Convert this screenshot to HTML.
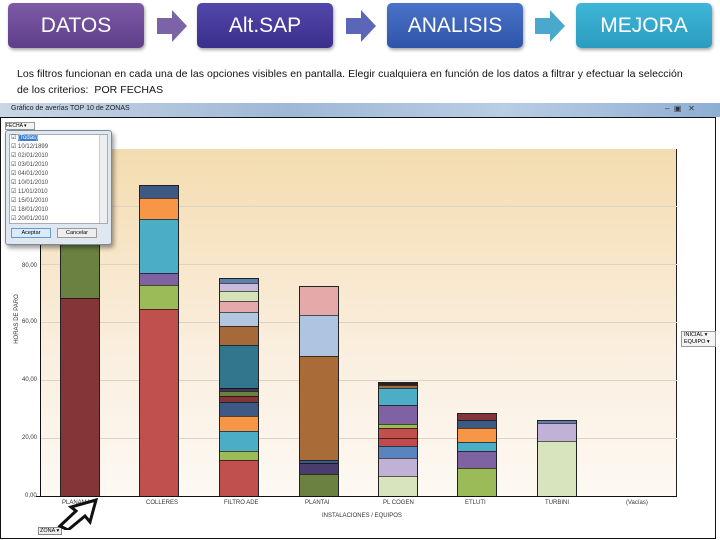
<!DOCTYPE html>
<html><head><meta charset="utf-8"><style>
*{margin:0;padding:0;box-sizing:border-box}
body{width:720px;height:540px;position:relative;background:#fff;font-family:"Liberation Sans",sans-serif;overflow:hidden}
.a{position:absolute}
.box{position:absolute;top:3px;width:136px;height:45px;border-radius:5px;color:#fff;font-size:21px;text-align:center;line-height:45px;box-shadow:1px 2px 3px rgba(0,0,0,.35)}
.arr{position:absolute;top:10px;width:30px;height:32px}
.seg{position:absolute;border-top:1px solid rgba(0,0,0,.6)}
.t{font-size:6px;color:#333;position:absolute}
</style></head><body>
<div class="box" style="left:8px;background:linear-gradient(#7d5aa6,#5f3f89)">DATOS</div>
<div class="box" style="left:197px;background:linear-gradient(#5248ab,#3b2f8c)">Alt.SAP</div>
<div class="box" style="left:387px;background:linear-gradient(#4a72c8,#2e55a8)">ANALISIS</div>
<div class="box" style="left:576px;background:linear-gradient(#3fb6d8,#2a9cc0)">MEJORA</div>
<svg class="arr" style="left:157px" viewBox="0 0 30 32"><path d="M0 8H15V0L30 16L15 32V24H0Z" fill="#7a63a6"/></svg>
<svg class="arr" style="left:346px" viewBox="0 0 30 32"><path d="M0 8H15V0L30 16L15 32V24H0Z" fill="#5b66b8"/></svg>
<svg class="arr" style="left:535px" viewBox="0 0 30 32"><path d="M0 8H15V0L30 16L15 32V24H0Z" fill="#49a8cc"/></svg>
<div class="a" style="left:17px;top:66px;font-size:10.5px;line-height:16px;color:#111;width:692px;letter-spacing:0.05px;white-space:nowrap">Los filtros funcionan en cada una de las opciones visibles en pantalla. Elegir cualquiera en función de los datos a filtrar y efectuar la selección<br>de los criterios:&nbsp; POR FECHAS</div>
<!-- window -->
<div class="a" style="left:0;top:103px;width:720px;height:14px;background:linear-gradient(90deg,#c9d6e6,#9fb8d6 40%,#b9cde4 70%,#8eaed3)"></div>
<div class="a" style="left:11px;top:105px;font-size:7px;color:#222">Gráfico de averías TOP 10 de ZONAS</div>
<div class="a" style="left:665px;top:104px;font-size:8px;color:#333">–&nbsp; ▣ &nbsp; ✕</div>
<div class="a" style="left:0;top:117px;width:716px;height:422px;border:1px solid #111;background:#fff"></div>
<div class="a" style="left:40px;top:149px;width:637px;height:347px;background:linear-gradient(#f4dcb0,#faefe0 60%,#fdf9f3);border-right:1px solid #222"></div>
<div class="a" style="left:40px;top:206px;width:637px;height:1px;background:#ddd3c3"></div>
<div class="a" style="left:40px;top:264px;width:637px;height:1px;background:#ddd3c3"></div>
<div class="a" style="left:40px;top:322px;width:637px;height:1px;background:#ddd3c3"></div>
<div class="a" style="left:40px;top:380px;width:637px;height:1px;background:#ddd3c3"></div>
<div class="a" style="left:40px;top:438px;width:637px;height:1px;background:#ddd3c3"></div>
<div class="a" style="left:40px;top:149px;width:1px;height:348px;background:#111"></div>
<div class="a" style="left:36px;top:496px;width:641px;height:1px;background:#111"></div>
<div class="t" style="left:22px;top:263px">80,00</div>
<div class="t" style="left:22px;top:319px">60,00</div>
<div class="t" style="left:22px;top:377px">40,00</div>
<div class="t" style="left:22px;top:435px">20,00</div>
<div class="t" style="left:25px;top:493px">0,00</div>
<div class="t" style="left:-8px;top:316px;transform:rotate(-90deg)">HORAS DE PARO</div>
<div id="bars"></div>
<div class="t" style="left:62px;top:500px">PLANAMA</div>
<div class="t" style="left:146px;top:500px">COLLERES</div>
<div class="t" style="left:224px;top:500px">FILTRO ADE</div>
<div class="t" style="left:305px;top:500px">PLANTAI</div>
<div class="t" style="left:383px;top:500px">PL COGEN</div>
<div class="t" style="left:465px;top:500px">ETLUTI</div>
<div class="t" style="left:545px;top:500px">TURBINI</div>
<div class="t" style="left:626px;top:500px">(Vacías)</div>
<div class="t" style="left:322px;top:513px">INSTALACIONES / EQUIPOS</div>
<div class="a" style="left:681px;top:331px;width:35px;height:16px;border:1px solid #999;background:#f4f4f4;font-size:5.5px;line-height:7px;padding-left:2px">INICIAL ▾<br>EQUIPO ▾</div>
<div class="a" style="left:38px;top:527px;width:24px;height:8px;border:1px solid #888;background:#f0f0f0;font-size:5.5px;line-height:7px;padding-left:1px">ZONA ▾</div>
<svg class="a" style="left:56px;top:498px" width="46" height="32" viewBox="0 0 46 32"><path d="M4 28L20 13L15 9L40 2L34 24L29 18L12 32Z" fill="#fff" stroke="#111" stroke-width="3"/></svg>
<!-- popup -->
<div class="a" style="left:5px;top:122px;width:30px;height:8px;border:1px solid #999;background:#f4f4f4;font-size:5px">FECHA ▾</div>
<div class="a" style="left:5px;top:130px;width:107px;height:115px;border:1px solid #7a8a9a;border-radius:3px;background:#dfe8f1;box-shadow:2px 3px 5px rgba(0,0,0,.4)"></div>
<div class="a" style="left:9px;top:134px;width:99px;height:90px;background:#fff;border:1px solid #aab"></div>
<div class="a" style="left:99px;top:135px;width:8px;height:88px;background:#eee;border-left:1px solid #ccc"></div>
<div class="a" style="left:11px;top:134px;font-size:6px;line-height:9px;color:#444">☑ <span style="background:#3a7fd0;color:#fff">(Todas)</span><br>☑ 10/12/1899<br>☑ 02/01/2010<br>☑ 03/01/2010<br>☑ 04/01/2010<br>☑ 10/01/2010<br>☑ 11/01/2010<br>☑ 15/01/2010<br>☑ 18/01/2010<br>☑ 20/01/2010</div>
<div class="a" style="left:11px;top:228px;width:40px;height:10px;border:1px solid #6a9ac8;background:#d9ebfa;font-size:5.5px;text-align:center;line-height:9px">Aceptar</div>
<div class="a" style="left:57px;top:228px;width:40px;height:10px;border:1px solid #999;background:#eee;font-size:5.5px;text-align:center;line-height:9px">Cancelar</div>
<script>
var B=[[60,[[298,496,'#843537'],[230,298,'#6b8141']]],
[139,[[309,496,'#c0504d'],[285,309,'#9bbb59'],[273,285,'#7f62a1'],[219,273,'#4badc6'],[198,219,'#f79646'],[185,198,'#3d5a85']]],
[219,[[460,496,'#c0504d'],[451,460,'#9bbb59'],[431,451,'#4badc6'],[416,431,'#f79646'],[402,416,'#3d5a85'],[396,402,'#843537'],[391,396,'#6b8141'],[388,391,'#403160'],[345,388,'#31768c'],[326,345,'#a5693a'],[312,326,'#b2c6e0'],[301,312,'#e6a9a9'],[291,301,'#d4e2b7'],[283,291,'#c8bbd9'],[278,283,'#5a7fb0']]],
[299,[[474,496,'#6b8141'],[463,474,'#4b3c6e'],[460,463,'#3d5a85'],[356,460,'#a96b37'],[315,356,'#aec4e0'],[286,315,'#e6a9a9']]],
[378,[[476,496,'#d7e4bd'],[458,476,'#c0b2d6'],[446,458,'#5a84bd'],[438,446,'#bf4b4b'],[428,438,'#c0504d'],[424,428,'#9bbb59'],[405,424,'#7f62a1'],[388,405,'#4badc6'],[385,388,'#a5693a'],[382,385,'#222']]],
[457,[[468,496,'#9bbb59'],[451,468,'#7f62a1'],[442,451,'#4badc6'],[428,442,'#f79646'],[420,428,'#3d5a85'],[413,420,'#843537']]],
[537,[[441,496,'#d7e4bd'],[423,441,'#c0b2d6'],[420,423,'#5a7fb0']]]];
var h='';B.forEach(function(b){var top=999;b[1].forEach(function(s){top=Math.min(top,s[0]);h+='<div class="seg" style="left:'+b[0]+'px;top:'+s[0]+'px;width:40px;height:'+(s[1]-s[0])+'px;background:'+s[2]+'"></div>'});h+='<div class="a" style="left:'+b[0]+'px;top:'+top+'px;width:40px;height:'+(496-top)+'px;border:1px solid #222;border-bottom:0"></div>'});
document.getElementById('bars').innerHTML=h;
</script>
</body></html>
